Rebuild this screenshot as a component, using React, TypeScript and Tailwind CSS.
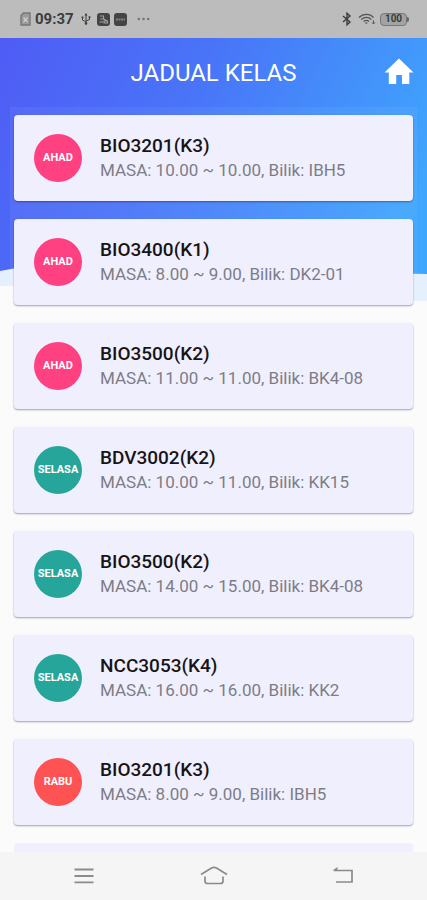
import React from 'react';

interface ClassSession {
    id: number;
    day: string;
    code: string;
    start: string;
    end: string;
    room: string;
}

const sessions: ClassSession[] = [
    { id: 1, day: 'AHAD', code: 'BIO3201(K3)', start: '10.00', end: '10.00', room: 'IBH5' },
    { id: 2, day: 'AHAD', code: 'BIO3400(K1)', start: '8.00', end: '9.00', room: 'DK2-01' },
    { id: 3, day: 'AHAD', code: 'BIO3500(K2)', start: '11.00', end: '11.00', room: 'BK4-08' },
    { id: 4, day: 'SELASA', code: 'BDV3002(K2)', start: '10.00', end: '11.00', room: 'KK15' },
    { id: 5, day: 'SELASA', code: 'BIO3500(K2)', start: '14.00', end: '15.00', room: 'BK4-08' },
    { id: 6, day: 'SELASA', code: 'NCC3053(K4)', start: '16.00', end: '16.00', room: 'KK2' },
    { id: 7, day: 'RABU', code: 'BIO3201(K3)', start: '8.00', end: '9.00', room: 'IBH5' },
];

const dayColors: Record<string, string> = {
    AHAD: 'bg-[#ff4081]',
    SELASA: 'bg-[#26a69a]',
    RABU: 'bg-[#ff5252]',
};

function StatusBar() {
    return (
        <div className="flex h-[38px] shrink-0 items-center justify-between bg-[#bcbcbc] pl-5 pr-[18px] text-[#3c3c3c]">
            <div className="flex items-center">
                {/* SD card */}
                <svg className="mr-1 h-[14px] w-[11px]" viewBox="0 0 11 14" fill="none" stroke="#777777">
                    <path d="M3.5 1H10v12H1V3.5z" fill="#9b9b9b" strokeWidth="1.4" />
                    <path d="M3.5 5.5l4 4.5M7.5 5.5l-4 4.5" stroke="#d0d0d0" strokeWidth="1.2" />
                </svg>
                <span className="text-[15px] leading-5 font-bold">09:37</span>
                {/* USB */}
                <svg className="ml-[7px] h-3 w-[10px]" viewBox="0 0 10 12" fill="none" stroke="currentColor">
                    <path d="M5 10V1.5M5 9L1.5 7V4.5M5 8l3.5-1.5V4" strokeWidth="1" />
                    <path d="M3.5 2.5L5 0l1.5 2.5z" fill="currentColor" stroke="none" />
                    <circle cx="5" cy="10.5" r="1.3" fill="currentColor" stroke="none" />
                    <path d="M.6 3.5h1.8v1.8H.6zM7.6 3.2h1.8V5H7.6z" fill="currentColor" stroke="none" />
                </svg>
                <svg className="ml-[6px] h-[13px] w-[13px]" viewBox="0 0 13 13" fill="none" stroke="#a0a0a0">
                    <rect width="13" height="13" rx="3" fill="#444444" stroke="none" />
                    <path d="M3 3h3.500v3H3.200M2.500 9h3.500M6 5.500l4 2.500M7 8v2h3.500V8z" strokeWidth="1.1" />
                </svg>
                <svg className="ml-1 h-[13px] w-[13px]" viewBox="0 0 13 13" fill="none" stroke="#808080">
                    <rect width="13" height="13" rx="3" fill="#444444" stroke="none" />
                    <path d="M2 6.5h9" strokeWidth="1.8" strokeDasharray="2 .5" />
                </svg>
                <svg className="ml-[10px] h-1 w-[13px]" viewBox="0 0 13 4" fill="#777777">
                    <circle cx="1.8" cy="2" r="1.3" />
                    <circle cx="6.5" cy="2" r="1.3" />
                    <circle cx="11.2" cy="2" r="1.3" />
                </svg>
            </div>
            <div className="flex items-center">
                {/* Bluetooth */}
                <svg className="h-[14px] w-[10px]" viewBox="0 0 10 14" fill="none" stroke="currentColor" strokeWidth="1.4">
                    <path d="M1 4l7 6-3 2.8V1.2L8 4l-7 6" />
                </svg>
                {/* Wifi */}
                <svg className="ml-[6px] h-3 w-[18px]" viewBox="0 0 18 12" fill="none" stroke="#555555" strokeWidth="1.3">
                    <path d="M1 4.5C5 .2 12 .2 15.5 4.5M3.2 6.6c3-3 7.4-3 10.2 0M5.6 8.6c1.5-1.3 3.9-1.3 5.4 0" />
                    <path d="M6.8 9.5h3L8.3 11.3z" fill="#555555" stroke="none" />
                    <path d="M15.5 7.3v3.5M14 9.5l1.5 1.5L17 9.5" strokeWidth="1" />
                </svg>
                {/* Battery */}
                <div className="ml-1 flex items-center">
                    <span className="flex h-[13px] w-[27px] items-center justify-center rounded border border-[#777777] bg-[#a3a3a3] text-[10px] leading-3 font-bold">
                        100
                    </span>
                    <span className="h-[5px] w-[2px] rounded-r bg-[#666666]" />
                </div>
            </div>
        </div>
    );
}

function HeaderWave() {
    return (
        <svg className="absolute inset-x-0 top-0 h-[264px] w-full" viewBox="0 0 427 264" preserveAspectRatio="none" aria-hidden="true">
            <defs>
                <linearGradient id="sky" gradientUnits="userSpaceOnUse" x1="0" y1="0" x2="400" y2="200">
                    <stop offset="0" stopColor="#4f5cf5" />
                    <stop offset="0.45" stopColor="#4975f8" />
                    <stop offset="1" stopColor="#3fa6fd" />
                </linearGradient>
            </defs>
            <path d="M0 0H427V263C330 264 270 225 160 235C100 240 60 248 0 248z" fill="#e4f0fc" />
            <path d="M0 0H427V236C330 236 270 215 160 205C100 200 60 224 0 233z" fill="url(#sky)" />
        </svg>
    );
}

function SessionCard({ session }: { session: ClassSession }) {
    return (
        <li className="flex h-[86px] shrink-0 items-center gap-[18px] rounded bg-[#f0effd] pl-5 shadow-[0_1px_2px_#0000005c]">
            <div className={`flex size-12 shrink-0 items-center justify-center rounded-full text-[11px] font-bold text-white ${dayColors[session.day]}`}>
                {session.day}
            </div>
            <div className="min-w-0">
                <h2 className="text-[19px] leading-6 font-medium text-[#151518]">{session.code}</h2>
                <p className="text-[17px] leading-6 text-[#7d7d87]">
                    MASA: {session.start} ~ {session.end}, Bilik: {session.room}
                </p>
            </div>
        </li>
    );
}

function NavigationBar() {
    return (
        <nav className="z-10 grid h-12 shrink-0 grid-cols-[1fr_90px_1fr] items-center bg-[#f5f5f5] px-[72px] text-[#8b8b8b]">
            <button type="button" aria-label="Menu" className="justify-self-start">
                <svg className="h-6 w-6" viewBox="0 0 24 24" fill="none" stroke="currentColor" strokeWidth="1.8">
                    <path d="M2.5 5.5h19M2.5 12h19M2.5 18.3h19" />
                </svg>
            </button>
            <button type="button" aria-label="Home" className="justify-self-center">
                <svg className="h-6 w-7" viewBox="0 0 28 24" fill="none" stroke="currentColor" strokeWidth="1.7" strokeLinejoin="round">
                    <path d="M1 10.5L11.500 4Q14 2.700 16.500 4L27 10.500M5 12.500v4.500Q5 19.500 7.500 19.500h13Q23 19.500 23 17v-4.500" />
                </svg>
            </button>
            <button type="button" aria-label="Back" className="justify-self-end">
                <svg className="h-6 w-6" viewBox="0 0 24 24" fill="none" stroke="currentColor" strokeWidth="1.7">
                    <path d="M3 6.5H21V18H5" />
                    <path d="M1.5 6.5L6.5 3v3.5z" fill="currentColor" stroke="none" />
                </svg>
            </button>
        </nav>
    );
}

export default function App() {
    return (
        <div className="flex h-screen flex-col bg-[#fbfbfb] font-[Roboto,sans-serif]">
            <StatusBar />
            <div className="relative flex min-h-0 flex-1 flex-col overflow-hidden">
                <HeaderWave />
                <header className="relative grid h-[69px] shrink-0 grid-cols-[34px_1fr_34px] items-center px-[11px] text-white">
                    <h1 className="col-start-2 text-center text-2xl">JADUAL KELAS</h1>
                    <a href="#home" aria-label="Home">
                        <svg className="size-[34px]" viewBox="0 0 34 34" fill="currentColor">
                            <path d="M17 2.500L2.500 16.500H6.800V28H14.200V19H20V28H27.300V16.500H31.500z" />
                        </svg>
                    </a>
                </header>
                <main className="relative mx-[10px] min-h-0 flex-1 overflow-hidden bg-white/5">
                    <ul className="flex flex-col gap-[18px] px-1 pt-2">
                        {sessions.map(session => (
                            <SessionCard key={session.id} session={session} />
                        ))}
                        <li className="h-[86px] shrink-0 rounded bg-[#f0effd]" aria-hidden="true" />
                    </ul>
                </main>
            </div>
            <NavigationBar />
        </div>
    );
}
